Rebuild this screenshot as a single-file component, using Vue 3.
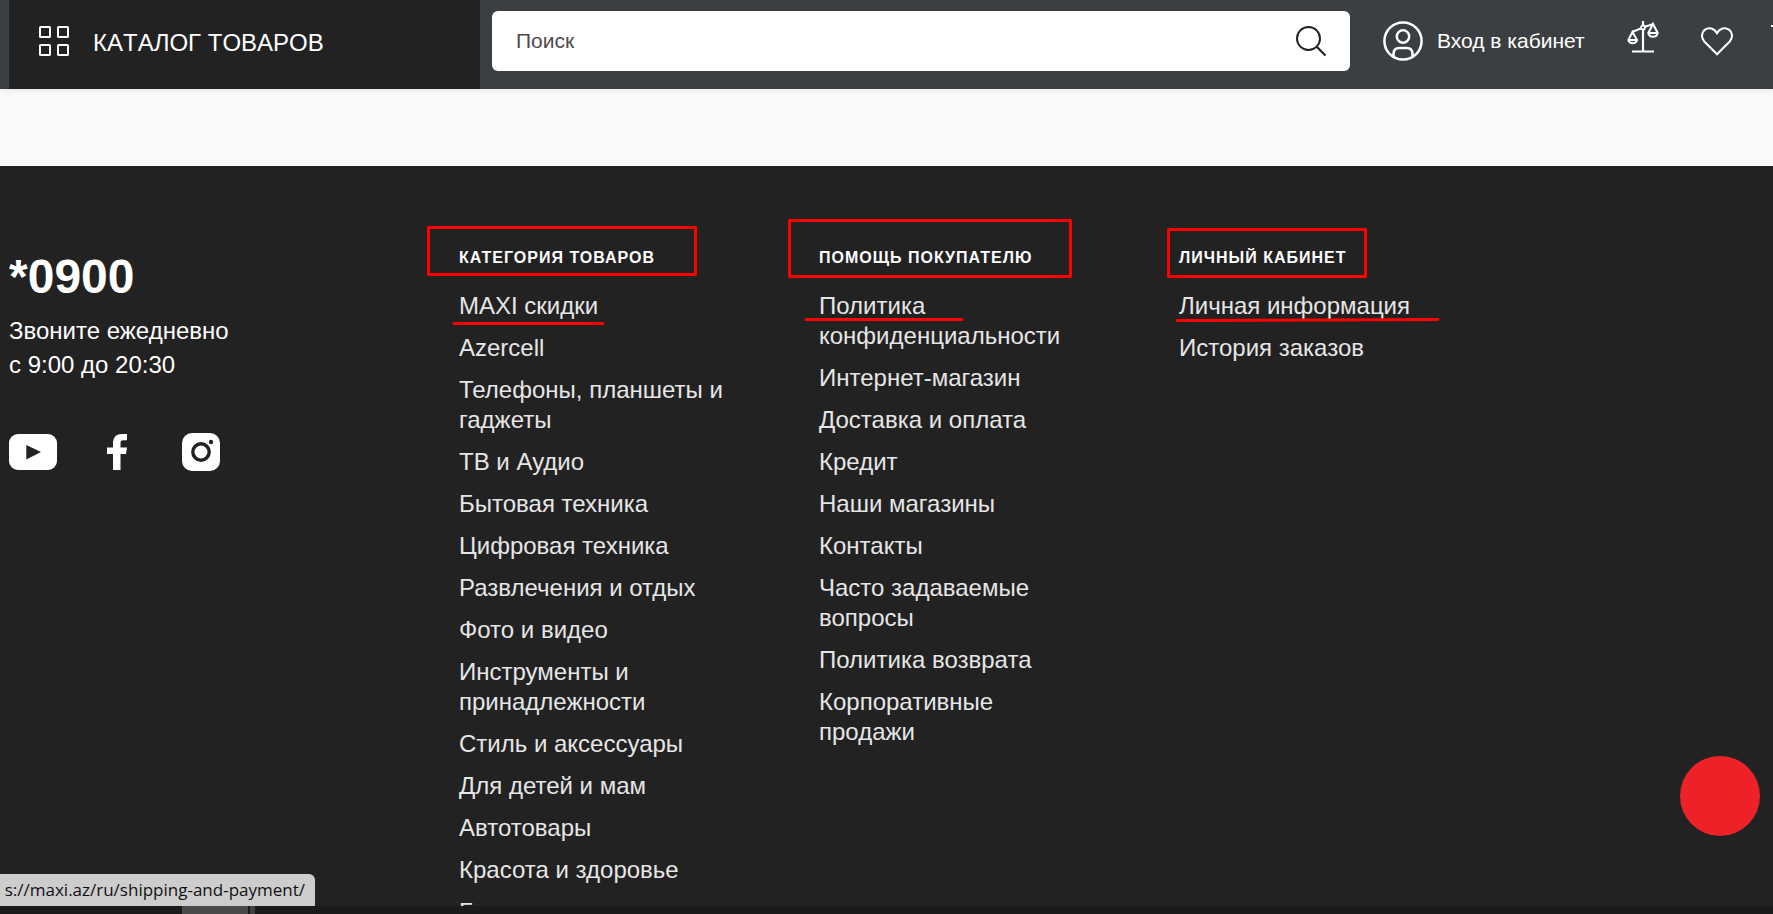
<script setup>
const columns = [
  {
    title: 'КАТЕГОРИЯ ТОВАРОВ',
    links: [
      'MAXI скидки',
      'Azercell',
      'Телефоны, планшеты и гаджеты',
      'ТВ и Аудио',
      'Бытовая техника',
      'Цифровая техника',
      'Развлечения и отдых',
      'Фото и видео',
      'Инструменты и принадлежности',
      'Стиль и аксессуары',
      'Для детей и мам',
      'Автотовары',
      'Красота и здоровье',
      'Бренды',
    ],
  },
  {
    title: 'ПОМОЩЬ ПОКУПАТЕЛЮ',
    links: [
      'Политика конфиденциальности',
      'Интернет-магазин',
      'Доставка и оплата',
      'Кредит',
      'Наши магазины',
      'Контакты',
      'Часто задаваемые вопросы',
      'Политика возврата',
      'Корпоративные продажи',
    ],
  },
  {
    title: 'ЛИЧНЫЙ КАБИНЕТ',
    links: ['Личная информация', 'История заказов'],
  },
]
</script>

<template>
  <div class="screen">
    <header class="header">
      <button class="catalog" type="button">
        <svg width="30" height="30" viewBox="0 0 30 30" fill="none" stroke="#fff" stroke-width="2">
          <rect x="1" y="1" width="10" height="10" rx="0.5" />
          <rect x="19" y="1" width="10" height="10" rx="0.5" />
          <rect x="1" y="19" width="10" height="10" rx="0.5" />
          <rect x="19" y="19" width="10" height="10" rx="0.5" />
        </svg>
        <span>КАТАЛОГ ТОВАРОВ</span>
      </button>
      <form class="search" @submit.prevent>
        <input type="search" placeholder="Поиск" aria-label="Поиск" />
        <button type="submit" aria-label="Найти">
          <svg width="32" height="32" viewBox="0 0 32 32" fill="none" stroke="#222" stroke-width="2">
            <circle cx="13.5" cy="13.5" r="11.5" />
            <path d="M21.5 21.5L30.5 30.5" stroke-width="2.2" />
          </svg>
        </button>
      </form>
      <nav class="actions">
        <a class="account" href="#">
          <svg width="40" height="40" viewBox="0 0 40 40" fill="none" stroke="#fff" stroke-width="2.5">
            <circle cx="20" cy="20" r="18.6" />
            <circle cx="20" cy="15.5" r="6.2" />
            <path d="M10.5 35.5V33q0-6 6-6h7q6 0 6 6v2.5" />
          </svg>
          <span>Вход в кабинет</span>
        </a>
        <a class="scales" href="#" aria-label="Сравнение">
          <svg width="32" height="34" viewBox="0 0 32 34" fill="none" stroke="#fff" stroke-width="2.2">
            <path d="M16 1V31M5 31.5H27" />
            <path d="M5 12L15 8M17 7L26.5 4" />
            <circle cx="16" cy="7.5" r="2" fill="#3c3f42" stroke-width="1.8" />
            <path d="M5.500 12L1.300 20a4.600 4.600 0 0 0 8.800 0zM1.300 20H10" stroke-width="2" />
            <path d="M26 4L21.300 13a4.800 4.800 0 0 0 9.400 0zM21.300 13H30.700" stroke-width="2" />
          </svg>
        </a>
        <a class="heart" href="#" aria-label="Избранное">
          <svg width="32" height="29" viewBox="0 0 32 29" fill="none" stroke="#fff" stroke-width="2">
            <path d="M16 27.300L3.300 14.500C-.2 10.500 .5 5 4 2.600C8-.1 13 1 16 6.200C19 1 24-.1 28 2.600C31.500 5 32.200 10.500 28.700 14.500Z" />
          </svg>
        </a>
        <a class="cart" href="#" aria-label="Корзина">
          <svg width="32" height="30" viewBox="0 0 32 30" fill="none" stroke="#fff" stroke-width="2">
            <path d="M0 1H6L11 20H26L30 6H8" />
            <circle cx="13" cy="26" r="2" />
            <circle cx="24" cy="26" r="2" />
          </svg>
        </a>
      </nav>
    </header>

    <div class="band"></div>

    <footer class="footer">
      <section class="contact">
        <a class="phone" href="tel:*0900">*0900</a>
        <p>Звоните ежедневно<br />с 9:00 до 20:30</p>
        <div class="social">
          <a href="#" aria-label="YouTube">
            <svg width="48" height="36" viewBox="0 0 48 36">
              <rect width="48" height="36" rx="9" fill="#fff" />
              <path d="M17.300 11V25.500L32 18z" fill="#222" />
            </svg>
          </a>
          <a href="#" aria-label="Facebook">
            <svg width="20" height="36" viewBox="0 0 20 36" fill="#fff">
              <path d="M6 36V20H0V13.500H6V9.500C6 3 9.500 0 15 0H20V6.300H16.500C14 6.300 13.500 7.500 13.500 9.500V13.500H20L19 20H13.500V36z" />
            </svg>
          </a>
          <a href="#" aria-label="Instagram">
            <svg width="38" height="38" viewBox="0 0 38 38">
              <rect width="38" height="38" rx="10" fill="#fff" />
              <circle cx="19" cy="19" r="8.200" fill="none" stroke="#222" stroke-width="3.400" />
              <circle cx="29" cy="9" r="2.200" fill="#222" />
            </svg>
          </a>
        </div>
      </section>

      <nav v-for="column in columns" :key="column.title" class="column" :aria-label="column.title">
        <h2>{{ column.title }}</h2>
        <ul>
          <li v-for="link in column.links" :key="link"><a href="#">{{ link }}</a></li>
        </ul>
      </nav>
    </footer>

    <div class="taskbar"><span class="task"></span><span class="task-edge"></span></div>

    <svg class="marks" width="1773" height="914" viewBox="0 0 1773 914" fill="none" stroke="#f00" stroke-width="3" stroke-linejoin="round" stroke-linecap="round" aria-hidden="true">
      <rect x="428.500" y="227.500" width="267" height="47" />
      <rect x="789.500" y="220.500" width="281" height="56" />
      <rect x="1168.500" y="229.500" width="197" height="47" />
      <path d="M454 323.500H603M806 319.500H962M1177 320.500L1438 319.500" />
    </svg>

    <button class="chat" type="button" aria-label="Чат"></button>
    <div class="status"><span>s://maxi.az/ru/shipping-and-payment/</span></div>
  </div>
</template>

<style>
body {
  margin: 0;
}
</style>

<style scoped>
.screen {
  position: relative;
  display: flex;
  flex-direction: column;
  height: 100vh;
  overflow: hidden;
  background: #222;
  font-family: "Liberation Sans", Arial, sans-serif;
  color: #fff;
}
.screen * {
  box-sizing: border-box;
}
svg {
  display: block;
}
a {
  color: inherit;
  text-decoration: none;
}
button {
  border: 0;
  padding: 0;
  font: inherit;
  color: inherit;
  cursor: pointer;
}
.header {
  display: flex;
  flex: none;
  height: 89px;
  padding-left: 9px;
  background: #3c3f42;
  box-shadow: 0 1px 6px rgba(0, 0, 0, 0.1);
  z-index: 1;
}
.catalog {
  display: flex;
  align-items: center;
  gap: 24px;
  width: 471px;
  padding: 0 30px 7px;
  background: #222;
  font-size: 24px;
  font-kerning: none;
}
.catalog span {
  padding-top: 3px;
}
.search {
  display: flex;
  flex: 1;
  height: 60px;
  margin: 11px 0 0 12px;
  padding: 0 23px 0 24px;
  background: #fff;
  border-radius: 6px;
}
.search input {
  flex: 1;
  min-width: 0;
  border: 0;
  padding: 0;
  outline: 0;
  background: none;
  font: 21px "Liberation Sans", Arial, sans-serif;
  color: #222;
}
.search input::placeholder {
  color: #514a4a;
  opacity: 1;
}
.search button {
  background: none;
}
.actions {
  display: flex;
  align-items: flex-start;
  width: 423px;
  padding-left: 33px;
}
.actions a {
  flex: none;
}
.account {
  display: flex;
  align-items: center;
  gap: 14px;
  width: 244px;
  padding-top: 21px;
  font-size: 21px;
  white-space: nowrap;
}
.scales {
  width: 74px;
  padding-top: 20px;
}
.heart {
  padding-top: 27px;
}
.cart {
  padding: 25px 0 0 38px;
}
.band {
  flex: none;
  height: 77px;
  background: #fafafa;
}
.footer {
  display: grid;
  flex: 1;
  min-height: 0;
  overflow: hidden;
  grid-template-columns: 450fr 360fr 360fr 594fr;
  align-items: start;
  padding: 81px 0 0 9px;
}
.contact {
  padding-top: 2px;
}
.phone {
  display: block;
  font-size: 48px;
  line-height: 56px;
  font-weight: 700;
}
.contact p {
  margin: 9px 0 51px;
  font-size: 24px;
  line-height: 34px;
}
.social {
  display: flex;
  align-items: center;
}
.social a {
  margin-right: 50px;
}
.social a:nth-child(2) {
  margin-right: 55px;
}
.column {
  padding-right: 90px;
}
.column:last-child {
  padding-right: 24px;
}
.column h2 {
  margin: 0 0 22px;
  font-size: 16px;
  line-height: 22px;
  font-weight: 700;
  letter-spacing: 1px;
  white-space: nowrap;
}
.column ul {
  display: flex;
  flex-direction: column;
  gap: 12px;
  margin: 0;
  padding: 0;
  list-style: none;
  font-size: 24px;
  line-height: 30px;
  color: #e6e6e6;
}
.taskbar {
  display: flex;
  flex: none;
  height: 8px;
  padding-left: 182px;
  background: #1b1b1b;
  gap: 2px;
}
.task {
  width: 66px;
  background: #4a4a4a;
}
.task-edge {
  width: 5px;
  background: #414141;
}
.marks {
  position: absolute;
  top: 0;
  left: 0;
  z-index: 2;
  pointer-events: none;
}
.chat {
  position: absolute;
  right: 13px;
  bottom: 78px;
  width: 80px;
  height: 80px;
  border-radius: 50%;
  background: #ed2228;
}
.status {
  position: absolute;
  left: 0;
  bottom: 8px;
  display: flex;
  justify-content: flex-end;
  width: 315px;
  height: 32px;
  padding-right: 10px;
  overflow: hidden;
  border-radius: 0 6px 0 0;
  background: #cdcdcd;
  color: #111;
  font: 17px/32px "Open Sans", "Noto Sans", sans-serif;
  white-space: nowrap;
}
</style>
